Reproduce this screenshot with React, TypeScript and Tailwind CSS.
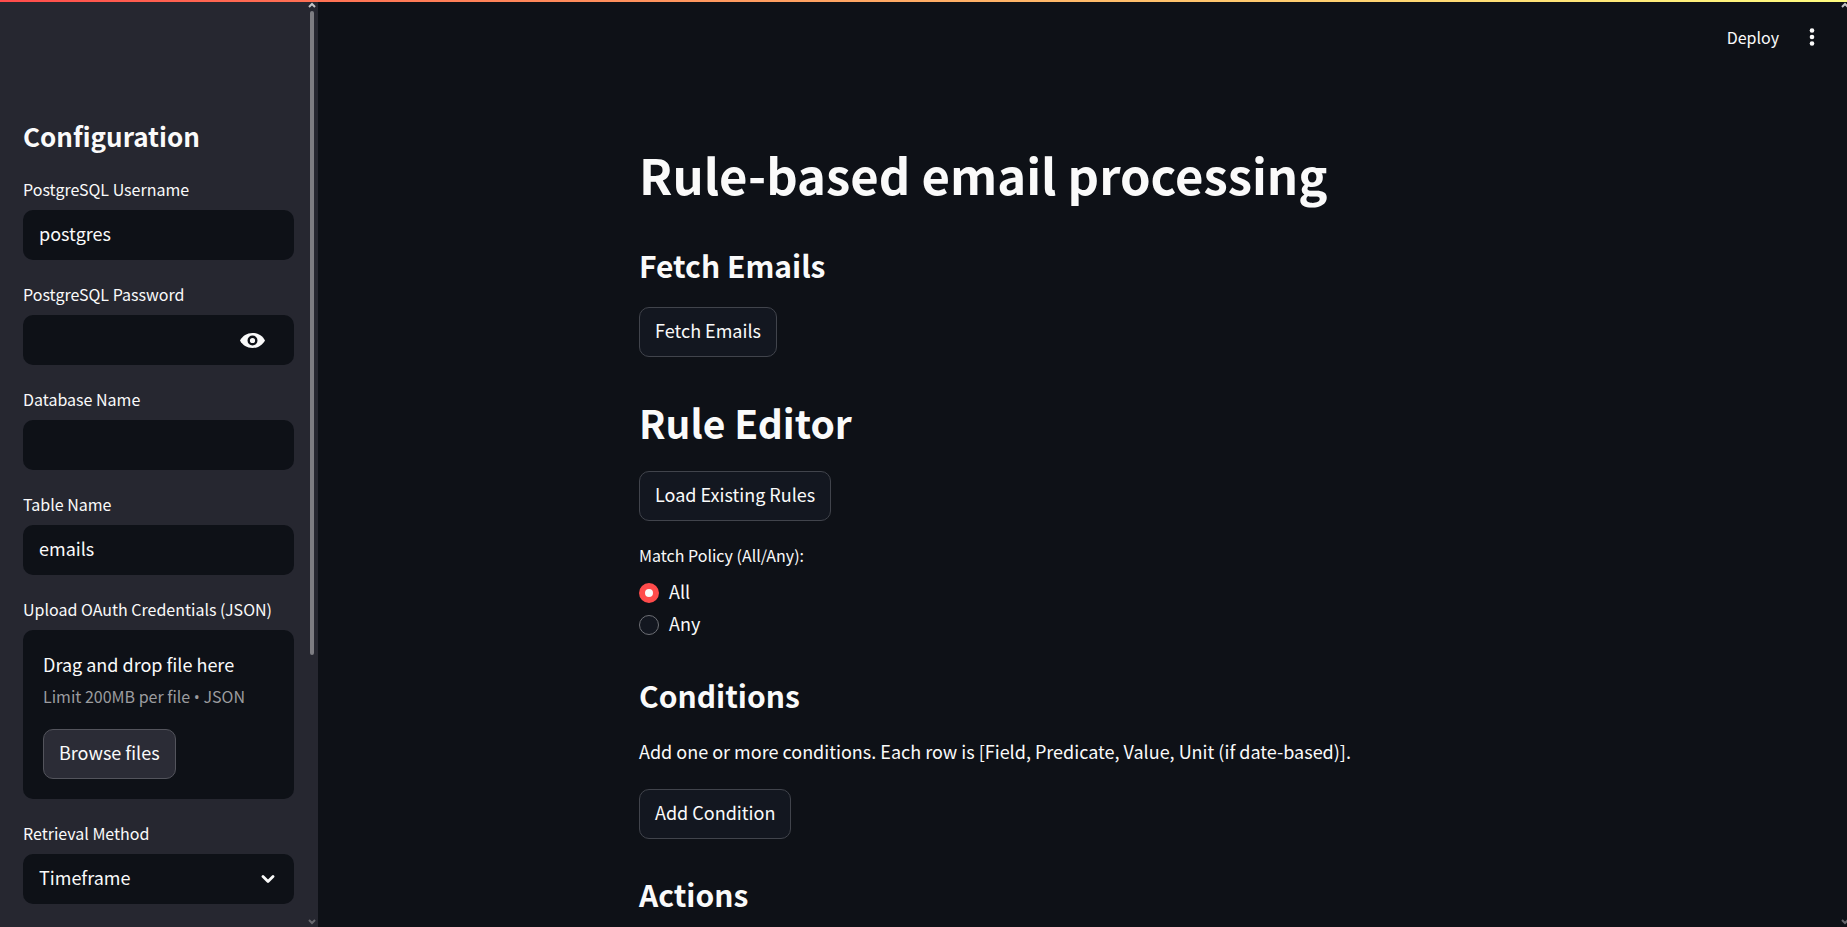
import { useState, type ReactNode } from 'react';

function Field({ id, label, children }: { id: string; label: string; children: ReactNode }) {
  return (
    <div className="flex flex-col gap-[7px]">
      <label htmlFor={id} className="text-base leading-7">{label}</label>
      {children}
    </div>
  );
}

function Button({ children }: { children: ReactNode }) {
  return (
    <button type="button" className="h-[50px] self-start rounded-[10px] border border-[#41444c] bg-[#131720] px-[15px] pb-1 text-lg leading-8">
      {children}
    </button>
  );
}

const inputClass = 'h-[50px] w-full rounded-[10px] bg-[#0e1117] px-4 pb-1 text-lg outline-none';

function Radio({ label, checked, onChange }: { label: string; checked: boolean; onChange: () => void }) {
  return (
    <label className="flex h-8 items-center gap-[10px] self-start text-lg leading-7">
      <input
        type="radio"
        name="policy"
        checked={checked}
        onChange={onChange}
        className="size-5 appearance-none rounded-full border border-[#6d6f75] bg-[#131720] checked:border-[6px] checked:border-[#ff4b4b] checked:bg-[#fafafa]"
      />
      <span className="pb-1">{label}</span>
    </label>
  );
}

function Arrow({ up, className }: { up?: boolean; className: string }) {
  return (
    <svg viewBox="0 0 8 6" className={className} fill="none" stroke="currentColor" strokeWidth="2" aria-hidden="true">
      <path d={up ? 'M1 5 4 2l3 3' : 'M1 1l3 3 3-3'} />
    </svg>
  );
}

export default function App() {
  const [policy, setPolicy] = useState('All');
  return (
    <div className="relative flex h-screen overflow-hidden bg-[#0e1117] font-['Noto_Sans_CJK_SC','Noto_Sans',sans-serif] text-[#fafafa]">
      <div className="absolute inset-x-0 top-0 z-10 h-[2px] bg-linear-to-r from-[#ff4b4b] to-[#fffd80]" />

      <aside className="relative flex w-[318px] shrink-0 flex-col gap-5 bg-[#262730] pt-[119px] pr-6 pl-[23px]">
        <h2 className="mb-[2px] text-[26px] leading-[34px] font-bold">Configuration</h2>
        <Field id="user" label="PostgreSQL Username">
          <input id="user" defaultValue="postgres" className={inputClass} />
        </Field>
        <Field id="password" label="PostgreSQL Password">
          <div className="flex h-[50px] items-center rounded-[10px] bg-[#0e1117] pr-[29px]">
            <input id="password" type="password" className="h-full min-w-0 flex-1 bg-transparent px-4 text-lg outline-none" />
            <button type="button" aria-label="Show password">
              <svg viewBox="0 0 25 15" className="h-[15px] w-[25px]" aria-hidden="true">
                <path fill="#fafafa" d="M12.500 0C7 0 2.500 2.900 0 7.500c2.500 4.600 7 7.500 12.500 7.500S22.500 12.100 25 7.500C22.500 2.900 18 0 12.500 0Z" />
                <circle cx="12.500" cy="7.500" r="3.800" fill="#fafafa" stroke="#0e1117" strokeWidth="2.400" />
              </svg>
            </button>
          </div>
        </Field>
        <Field id="database" label="Database Name">
          <input id="database" className={inputClass} />
        </Field>
        <Field id="table" label="Table Name">
          <input id="table" defaultValue="emails" className={inputClass} />
        </Field>
        <Field id="browse" label="Upload OAuth Credentials (JSON)">
          <section className="flex flex-col rounded-[10px] bg-[#0e1117] p-5">
            <span className="text-lg leading-7">Drag and drop file here</span>
            <span className="mt-1 text-base leading-7 text-[#9b9c9f]">
              Limit 200MB per file <span className="font-['Open_Sans',sans-serif] leading-none">•</span> JSON
            </span>
            <button id="browse" type="button" className="mt-[19px] h-[50px] self-start rounded-[10px] border border-[#53545c] bg-[#2b2c36] px-[15px] pb-1 text-lg leading-8">
              Browse files
            </button>
          </section>
        </Field>
        <Field id="method" label="Retrieval Method">
          <div className="relative">
            <select id="method" className={`${inputClass} appearance-none`}>
              <option>Timeframe</option>
            </select>
            <svg viewBox="0 0 14 9" className="pointer-events-none absolute top-[21px] right-[19px] h-[9px] w-[14px]" fill="none" stroke="#fafafa" strokeWidth="2.800" strokeLinecap="round" strokeLinejoin="round" aria-hidden="true">
              <path d="M2 1.500l5 5 5-5" />
            </svg>
          </div>
        </Field>
        <div className="absolute inset-y-0 right-[2px] flex w-2 flex-col items-center pt-[2px] pb-[2px]">
          <Arrow up className="h-[6px] w-2 shrink-0 text-[#c4c4c6]" />
          <div className="mt-[3px] h-[644px] w-1 shrink-0 rounded-full bg-[#7d7d82]" />
          <Arrow className="mt-auto h-[6px] w-2 shrink-0 text-[#69696f]" />
        </div>
      </aside>

      <main className="relative min-w-0 flex-1 pr-[7px]">
        <header className="absolute top-0 right-[25px] flex h-[73px] items-center gap-[23px]">
          <button type="button" className="text-base leading-7">Deploy</button>
          <button type="button" aria-label="Menu" className="flex w-[20px] justify-center">
            <svg viewBox="0 0 6 18" className="h-[18px] w-[6px]" fill="#fafafa" aria-hidden="true">
              <circle cx="3" cy="2.500" r="2.300" />
              <circle cx="3" cy="9" r="2.300" />
              <circle cx="3" cy="15.500" r="2.300" />
            </svg>
          </button>
        </header>

        <div className="mx-auto flex max-w-[920px] flex-col px-5 pt-[142px]">
          <h1 className="text-[49px] leading-[64px] font-bold">Rule-based email processing</h1>
          <h3 className="mt-[39px] mb-[22px] text-[30px] leading-10 font-bold">Fetch Emails</h3>
          <Button>Fetch Emails</Button>
          <h2 className="mt-10 mb-6 text-[39px] leading-[50px] font-bold">Rule Editor</h2>
          <Button>Load Existing Rules</Button>
          <fieldset className="mt-5 flex flex-col">
            <legend className="mb-2 text-base leading-7">Match Policy (All/Any):</legend>
            <Radio label="All" checked={policy === 'All'} onChange={() => setPolicy('All')} />
            <Radio label="Any" checked={policy === 'Any'} onChange={() => setPolicy('Any')} />
          </fieldset>
          <h3 className="mt-[34px] mb-[22px] text-[30px] leading-10 font-bold">Conditions</h3>
          <p className="mb-6 text-lg leading-7">
            Add one or more conditions. Each row is [Field, Predicate, Value, Unit (if date-based)].
          </p>
          <Button>Add Condition</Button>
          <h3 className="mt-[35px] text-[30px] leading-10 font-bold">Actions</h3>
        </div>

        <Arrow up className="absolute top-[2px] right-[-2px] h-[6px] w-2 text-[#c4c4c6]" />
        <Arrow className="absolute right-[-2px] bottom-[2px] h-[6px] w-2 text-[#69696f]" />
      </main>
    </div>
  );
}
